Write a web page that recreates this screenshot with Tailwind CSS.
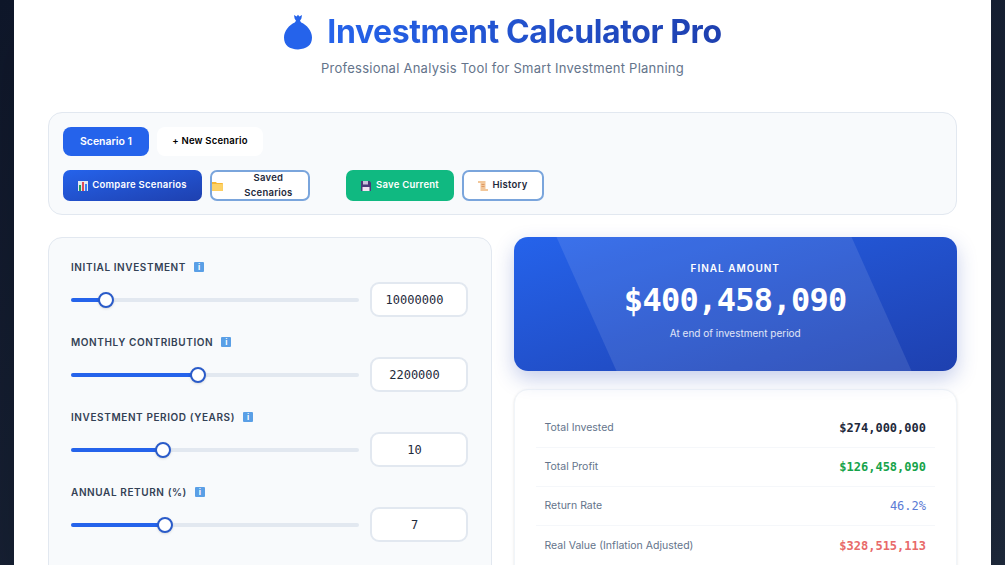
<!DOCTYPE html>
<html lang="en">
<head>
    <meta charset="UTF-8">
    <meta name="viewport" content="width=device-width, initial-scale=1.0">
    <script src="https://cdn.jsdelivr.net/npm/@tailwindcss/browser@4"></script>
</head>
<body class="h-screen overflow-hidden bg-gradient-to-br from-[#0f172a] to-[#1e293b] font-['Inter',sans-serif]">
    <div class="mx-[14px] h-[565px] overflow-hidden bg-white px-[34px] shadow-2xl">
        <!-- Header -->
        <header class="flex h-[112px] flex-col items-center pt-[10px]">
            <div class="flex h-[44px] items-center gap-[14px]">
                <svg class="h-[36px] w-[30px]" viewBox="0 0 30 36"><path fill="#2563eb" d="M11 1l2.6 1.6L15 .8l1.4 1.8L19 1l-.6 3.4-1.4 2.4 1.2 1.6c5.6 2.6 10.8 8 10.8 15.2 0 7.800-5.600 11.800-14 11.800S1 31.800 1 23.600C1 16.400 6.200 11 11.800 8.400L13 6.800l-1.400-2.400z"/></svg>
                <h1 class="bg-gradient-to-r from-[#2563eb] to-[#1e40af] bg-clip-text text-[32px] font-bold tracking-[-0.4px] text-transparent">Investment Calculator Pro</h1>
            </div>
            <p class="mt-[5px] text-[13px] tracking-[0.25px] text-[#64748b]">Professional Analysis Tool for Smart Investment Planning</p>
        </header>

        <!-- Scenarios -->
        <section class="flex h-[103px] flex-col gap-[14px] rounded-[14px] border border-[#e2e8f0] bg-[#f8fafc] px-[14px] pt-[14px]">
            <div class="flex gap-[8px]">
                <button class="h-[29px] w-[86px] rounded-[8px] bg-[#2563eb] text-[10.5px] font-semibold text-white">Scenario 1</button>
                <button class="h-[29px] w-[106px] rounded-[8px] bg-white text-[9.5px] font-semibold tracking-[0.2px] text-black">+ New Scenario</button>
            </div>
            <div class="flex gap-[8px]">
                <button class="flex h-[31px] w-[139px] items-center justify-center gap-[4px] rounded-[7px] bg-gradient-to-br from-[#2563eb] to-[#1e40af] text-[9.5px] font-semibold tracking-[0.25px] text-white">
                    <svg class="h-[10px] w-[10px]" viewBox="0 0 10 10"><rect width="10" height="10" fill="#e2e8f0"/><rect x="1" y="4" width="2" height="6" fill="#22a05a"/><rect x="4" y="1" width="2" height="9" fill="#dc4a5a"/><rect x="7" y="3" width="2" height="7" fill="#3b82f6"/></svg>
                    Compare Scenarios
                </button>
                <button class="flex h-[31px] w-[100px] items-center justify-center gap-[6px] rounded-[7px] border-2 border-[#7aa5dc] bg-white text-[9.5px] font-semibold tracking-[0.25px] text-[#1e293b]">
                    <svg class="h-[10px] w-[11px]" viewBox="0 0 11 10"><path fill="#f7b733" d="M0 1h4l1 1h6v8H0z"/><path fill="#fdd267" d="M0 3h11v7H0z"/></svg>
                    Saved Scenarios
                </button>
                <button class="ml-[28px] flex h-[31px] w-[108px] items-center justify-center gap-[5px] rounded-[7px] bg-[#10b981] text-[9.5px] font-semibold tracking-[0.25px] text-white">
                    <svg class="h-[10px] w-[10px]" viewBox="0 0 10 10"><path fill="#4b3a78" d="M0 0h8.500L10 1.500V10H0z"/><rect x="2" y="0" width="5" height="3.500" fill="#c9c2dc"/><rect x="1.500" y="6" width="7" height="4" fill="#f3e6f3"/></svg>
                    Save Current
                </button>
                <button class="flex h-[31px] w-[82px] items-center justify-center gap-[4px] rounded-[7px] border-2 border-[#7aa5dc] bg-white text-[9.5px] font-semibold tracking-[0.25px] text-[#1e293b]">
                    <svg class="h-[10px] w-[10px]" viewBox="0 0 10 10"><path fill="#f2c79a" d="M0 0h7.500v8H10v2H2.500V2H0z"/><path fill="#d98a52" d="M3.500 3h3v.8h-3zM3.500 5h3v.8h-3z"/></svg>
                    History
                </button>
            </div>
        </section>

        <!-- Main grid -->
        <div class="mt-[22px] grid grid-cols-2 gap-[22px]">
            <!-- Inputs -->
            <section class="flex h-[400px] flex-col gap-[18px] rounded-[14px] border border-[#e2e8f0] bg-[#f8fafc] px-[22px] pt-[22px]">
                <div>
                    <div class="flex h-[14px] items-center gap-[8px]">
                        <label class="text-[10px] font-semibold tracking-[0.6px] text-[#334155]">INITIAL INVESTMENT</label>
                        <span class="flex h-[10px] w-[10px] items-center justify-center rounded-[1px] bg-[#5a9fe6] text-[8px] font-bold leading-none text-white">i</span>
                    </div>
                    <div class="mt-[8px] flex h-[35px] items-center gap-[11px]">
                        <div class="relative h-[4px] w-[288px] rounded-full bg-[#e2e8f0]">
                            <div class="h-full rounded-full bg-[#2563eb]" style="width: 12%"></div>
                            <div class="absolute top-1/2 h-[16px] w-[16px] -translate-x-1/2 -translate-y-1/2 rounded-full border-[2.5px] border-[#2a5bc9] bg-white shadow" style="left: 12%"></div>
                        </div>
                        <input type="text" value="10000000" class="h-[35px] w-[98px] rounded-[9px] border-2 border-[#e2e8f0] bg-white pr-[9px] text-center font-['DejaVu_Sans_Mono',monospace] text-[12px] font-medium text-[#1e293b]">
                    </div>
                </div>
                <div>
                    <div class="flex h-[14px] items-center gap-[8px]">
                        <label class="text-[10px] font-semibold tracking-[0.6px] text-[#334155]">MONTHLY CONTRIBUTION</label>
                        <span class="flex h-[10px] w-[10px] items-center justify-center rounded-[1px] bg-[#5a9fe6] text-[8px] font-bold leading-none text-white">i</span>
                    </div>
                    <div class="mt-[8px] flex h-[35px] items-center gap-[11px]">
                        <div class="relative h-[4px] w-[288px] rounded-full bg-[#e2e8f0]">
                            <div class="h-full rounded-full bg-[#2563eb]" style="width: 44%"></div>
                            <div class="absolute top-1/2 h-[16px] w-[16px] -translate-x-1/2 -translate-y-1/2 rounded-full border-[2.5px] border-[#2a5bc9] bg-white shadow" style="left: 44%"></div>
                        </div>
                        <input type="text" value="2200000" class="h-[35px] w-[98px] rounded-[9px] border-2 border-[#e2e8f0] bg-white pr-[9px] text-center font-['DejaVu_Sans_Mono',monospace] text-[12px] font-medium text-[#1e293b]">
                    </div>
                </div>
                <div>
                    <div class="flex h-[14px] items-center gap-[8px]">
                        <label class="text-[10px] font-semibold tracking-[0.6px] text-[#334155]">INVESTMENT PERIOD (YEARS)</label>
                        <span class="flex h-[10px] w-[10px] items-center justify-center rounded-[1px] bg-[#5a9fe6] text-[8px] font-bold leading-none text-white">i</span>
                    </div>
                    <div class="mt-[8px] flex h-[35px] items-center gap-[11px]">
                        <div class="relative h-[4px] w-[288px] rounded-full bg-[#e2e8f0]">
                            <div class="h-full rounded-full bg-[#2563eb]" style="width: 32%"></div>
                            <div class="absolute top-1/2 h-[16px] w-[16px] -translate-x-1/2 -translate-y-1/2 rounded-full border-[2.5px] border-[#2a5bc9] bg-white shadow" style="left: 32%"></div>
                        </div>
                        <input type="text" value="10" class="h-[35px] w-[98px] rounded-[9px] border-2 border-[#e2e8f0] bg-white pr-[9px] text-center font-['DejaVu_Sans_Mono',monospace] text-[12px] font-medium text-[#1e293b]">
                    </div>
                </div>
                <div>
                    <div class="flex h-[14px] items-center gap-[8px]">
                        <label class="text-[10px] font-semibold tracking-[0.6px] text-[#334155]">ANNUAL RETURN (%)</label>
                        <span class="flex h-[10px] w-[10px] items-center justify-center rounded-[1px] bg-[#5a9fe6] text-[8px] font-bold leading-none text-white">i</span>
                    </div>
                    <div class="mt-[8px] flex h-[35px] items-center gap-[11px]">
                        <div class="relative h-[4px] w-[288px] rounded-full bg-[#e2e8f0]">
                            <div class="h-full rounded-full bg-[#2563eb]" style="width: 32.500%"></div>
                            <div class="absolute top-1/2 h-[16px] w-[16px] -translate-x-1/2 -translate-y-1/2 rounded-full border-[2.5px] border-[#2a5bc9] bg-white shadow" style="left: 32.500%"></div>
                        </div>
                        <input type="text" value="7" class="h-[35px] w-[98px] rounded-[9px] border-2 border-[#e2e8f0] bg-white pr-[9px] text-center font-['DejaVu_Sans_Mono',monospace] text-[12px] font-medium text-[#1e293b]">
                    </div>
                </div>
            </section>

            <!-- Results -->
            <div class="flex flex-col gap-[18px]">
                <div class="relative flex h-[134px] flex-col items-center overflow-hidden rounded-[14px] bg-gradient-to-br from-[#2563eb] to-[#1e40af] pt-[24px] text-white shadow-[0_8px_20px_rgba(30,64,175,0.25)]">
                    <div class="absolute inset-0 bg-white/10 [clip-path:polygon(43px_0,338px_0,398px_100%,103px_100%)]"></div>
                    <div class="relative text-[10px] font-semibold tracking-[1px]">FINAL AMOUNT</div>
                    <div class="relative mt-[4px] font-['DejaVu_Sans_Mono',monospace] text-[32px] font-bold leading-[40px] tracking-[-0.7px]">$400,458,090</div>
                    <div class="relative mt-[6px] text-[10px] text-white/85">At end of investment period</div>
                </div>
                <div class="h-[300px] rounded-[14px] border border-[#f1f5f9] bg-white px-[21px] pt-[19px] shadow-sm">
                    <div class="flex h-[39px] items-center justify-between border-b border-[#f5f7fa] px-[9px]">
                        <span class="text-[10.5px] text-[#64748b]">Total Invested</span>
                        <span class="font-['DejaVu_Sans_Mono',monospace] text-[12px] font-semibold text-[#1e293b]">$274,000,000</span>
                    </div>
                    <div class="flex h-[39px] items-center justify-between border-b border-[#f5f7fa] px-[9px]">
                        <span class="text-[10.5px] text-[#64748b]">Total Profit</span>
                        <span class="font-['DejaVu_Sans_Mono',monospace] text-[12px] font-semibold text-[#16a34a]">$126,458,090</span>
                    </div>
                    <div class="flex h-[39px] items-center justify-between border-b border-[#f5f7fa] px-[9px]">
                        <span class="text-[10.5px] text-[#64748b]">Return Rate</span>
                        <span class="font-['DejaVu_Sans_Mono',monospace] text-[12px] font-medium text-[#5b7bd5]">46.2%</span>
                    </div>
                    <div class="flex h-[39px] items-center justify-between px-[9px]">
                        <span class="text-[10.5px] text-[#64748b]">Real Value (Inflation Adjusted)</span>
                        <span class="font-['DejaVu_Sans_Mono',monospace] text-[12px] font-semibold text-[#e86a6a]">$328,515,113</span>
                    </div>
                </div>
            </div>
        </div>
    </div>
</body>
</html>
